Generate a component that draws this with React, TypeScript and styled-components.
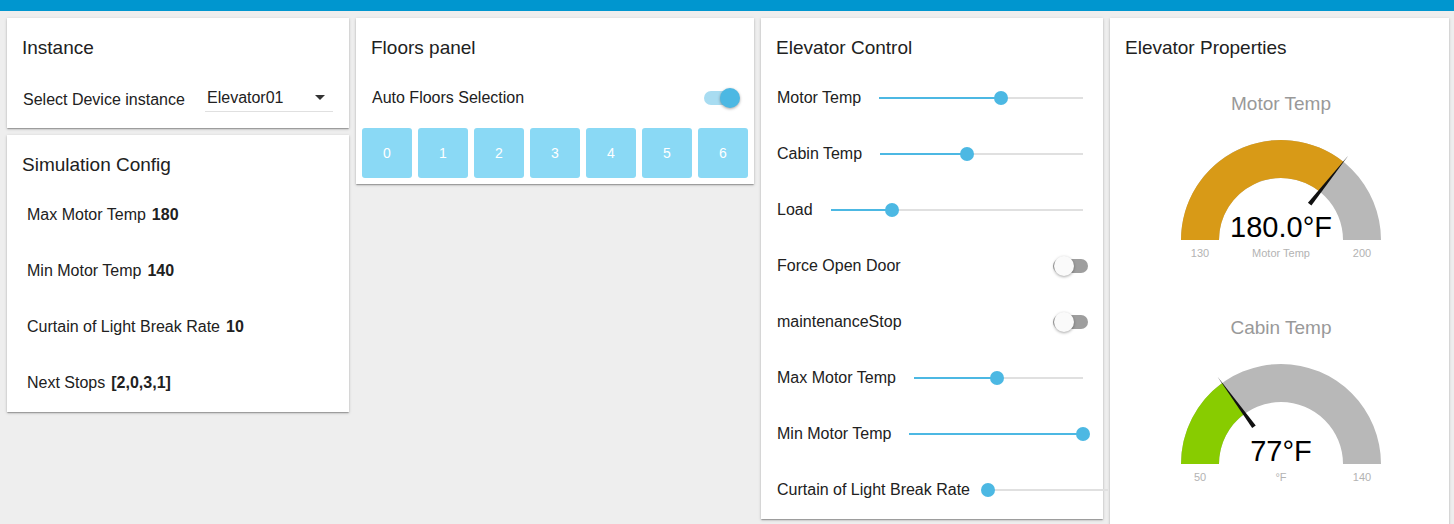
import { createGlobalStyle, styled } from 'styled-components'

const GlobalStyle = createGlobalStyle`
	html, body {
		margin: 0;
		padding: 0;
		overflow: hidden;
		background: #eeeeee;
		font-family: 'Liberation Sans', Arial, sans-serif;
		color: #212121;
	}
`

const config = [
	{ label: 'Max Motor Temp', value: '180' },
	{ label: 'Min Motor Temp', value: '140' },
	{ label: 'Curtain of Light Break Rate', value: '10' },
	{ label: 'Next Stops', value: '[2,0,3,1]' },
]

const controls = [
	{ kind: 'slider', label: 'Motor Temp', value: 0.6 },
	{ kind: 'slider', label: 'Cabin Temp', value: 0.426 },
	{ kind: 'slider', label: 'Load', value: 0.243 },
	{ kind: 'toggle', label: 'Force Open Door', on: false },
	{ kind: 'toggle', label: 'maintenanceStop', on: false },
	{ kind: 'slider', label: 'Max Motor Temp', value: 0.49 },
	{ kind: 'slider', label: 'Min Motor Temp', value: 1 },
	{ kind: 'slider', label: 'Curtain of Light Break Rate', value: 0 },
]

function Toggle({ on }: { on: boolean }) {
	return (
		<Switch>
			<Track $on={on} />
			<Knob $on={on} />
		</Switch>
	)
}

function Slider({ value }: { value: number }) {
	const pct = `${value * 100}%`
	return (
		<SliderBox>
			<Rail />
			<Fill style={{ width: pct }} />
			<Thumb style={{ left: `calc(${pct} - 7px)` }} />
		</SliderBox>
	)
}

function Gauge({
	title,
	value,
	min,
	max,
	unit,
	label,
	color,
}: {
	title: string
	value: string
	min: number
	max: number
	unit: string
	label: string
	color: string
}) {
	const cx = 120
	const cy = 170
	const R = 100
	const r = 62
	const frac = (parseFloat(value) - min) / (max - min)
	const a = Math.PI * (1 - frac)
	const ox = cx + R * Math.cos(a)
	const oy = cy - R * Math.sin(a)
	const ix = cx + r * Math.cos(a)
	const iy = cy - r * Math.sin(a)
	const bg = `M ${cx - R} ${cy} A ${R} ${R} 0 0 1 ${cx + R} ${cy} L ${cx + r} ${cy} A ${r} ${r} 0 0 0 ${cx - r} ${cy} Z`
	const fg = `M ${cx - R} ${cy} A ${R} ${R} 0 0 1 ${ox} ${oy} L ${ix} ${iy} A ${r} ${r} 0 0 0 ${cx - r} ${cy} Z`
	const dx = Math.cos(a)
	const dy = -Math.sin(a)
	const px = -dy
	const py = dx
	const n0 = 46
	const n1 = 108
	const needle = [
		`${cx + dx * n0 + px * 2.2},${cy + dy * n0 + py * 2.2}`,
		`${cx + dx * n1},${cy + dy * n1}`,
		`${cx + dx * n0 - px * 2.2},${cy + dy * n0 - py * 2.2}`,
	].join(' ')
	return (
		<GaugeBox>
			<svg width="240" height="224" viewBox="0 0 240 224">
				<text x={cx} y="40" textAnchor="middle" fontSize="19" fill="#999999" fontFamily="Liberation Sans, Arial, sans-serif">
					{title}
				</text>
				<path d={bg} fill="#b8b8b8" />
				<path d={fg} fill={color} />
				<polygon points={needle} fill="#111" />
				<text x={cx} y="167" textAnchor="middle" fontSize="29" fill="#000" fontFamily="Liberation Sans, Arial, sans-serif">
					{value}
					{unit}
				</text>
				<g fontSize="11" fill="#b3b3b3" fontFamily="Liberation Sans, Arial, sans-serif" textAnchor="middle">
					<text x={cx - 81} y="187">{min}</text>
					<text x={cx} y="187">{label}</text>
					<text x={cx + 81} y="187">{max}</text>
				</g>
			</svg>
		</GaugeBox>
	)
}

function App() {
	return (
		<>
			<GlobalStyle />
			<TopBar />
			<Grid>
				<Column>
					<Card>
						<Title>Instance</Title>
						<SelectRow>
							<SelectLabel>Select Device instance</SelectLabel>
							<SelectBox>
								<span>Elevator01</span>
								<svg width="10" height="5" viewBox="0 0 10 5">
									<polygon points="0,0 10,0 5,5" fill="#333" />
								</svg>
							</SelectBox>
						</SelectRow>
					</Card>
					<Card>
						<Title>Simulation Config</Title>
						<List>
							{config.map((c) => (
								<ConfigRow key={c.label}>
									<span>{c.label}</span>
									<b>{c.value}</b>
								</ConfigRow>
							))}
						</List>
					</Card>
				</Column>
				<Column>
					<Card>
						<Title>Floors panel</Title>
						<ControlRow>
							<span>Auto Floors Selection</span>
							<Toggle on />
						</ControlRow>
						<Floors>
							{[0, 1, 2, 3, 4, 5, 6].map((f) => (
								<FloorButton key={f}>{f}</FloorButton>
							))}
						</Floors>
					</Card>
				</Column>
				<Column>
					<Card>
						<Title>Elevator Control</Title>
						<List>
							{controls.map((c) => (
								<ControlRow key={c.label}>
									<RowLabel>{c.label}</RowLabel>
									{c.kind === 'slider' ? (
										<Slider value={c.value ?? 0} />
									) : (
										<Toggle on={!!c.on} />
									)}
								</ControlRow>
							))}
						</List>
					</Card>
				</Column>
				<Column>
					<PropsCard>
						<Title>Elevator Properties</Title>
						<Gauge
							title="Motor Temp"
							value="180.0"
							unit="°F"
							min={130}
							max={200}
							label="Motor Temp"
							color="#d89a17"
						/>
						<Gauge
							title="Cabin Temp"
							value="77"
							unit="°F"
							min={50}
							max={140}
							label="°F"
							color="#88cc00"
						/>
					</PropsCard>
				</Column>
			</Grid>
		</>
	)
}

export default App

const TopBar = styled.div`
	height: 11px;
	background: #0096cf;
`
const Grid = styled.div`
	display: grid;
	grid-template-columns: 342px 398px 342px 339px;
	column-gap: 7px;
	align-items: start;
	padding: 7px 7px 0;
`
const Column = styled.div`
	display: flex;
	flex-direction: column;
	gap: 7px;
`
const Card = styled.div`
	background: #fff;
	box-shadow:
		0 1px 3px rgba(0, 0, 0, 0.2),
		0 1px 1px rgba(0, 0, 0, 0.14),
		0 2px 1px -1px rgba(0, 0, 0, 0.12);
`
const PropsCard = styled(Card)`
	padding-bottom: 12px;
`
const Title = styled.div`
	font-size: 19px;
	line-height: 24px;
	padding: 18px 15px 10px;
`
const SelectRow = styled.div`
	display: flex;
	align-items: flex-end;
	justify-content: space-between;
	padding: 14px 16px 16px;
	font-size: 16px;
`
const SelectLabel = styled.div`
	line-height: 20px;
	padding-bottom: 2px;
`
const SelectBox = styled.div`
	width: 128px;
	height: 28px;
	box-sizing: border-box;
	border-bottom: 1px solid #e0e0e0;
	display: flex;
	align-items: center;
	justify-content: space-between;
	padding: 0 8px 0 2px;
	span {
		padding-top: 1px;
	}
	svg {
		margin-top: -1px;
	}
`
const List = styled.div`
	padding-bottom: 1px;
`
const ConfigRow = styled.div`
	height: 56px;
	display: flex;
	align-items: center;
	gap: 6px;
	padding: 0 20px;
	font-size: 16px;
	b {
		font-weight: bold;
	}
`
const ControlRow = styled.div`
	height: 56px;
	display: flex;
	align-items: center;
	justify-content: space-between;
	padding: 0 14px 0 16px;
	font-size: 16px;
`
const RowLabel = styled.span`
	white-space: nowrap;
	margin-right: 18px;
`
const SliderBox = styled.div`
	position: relative;
	flex: 1;
	min-width: 120px;
	height: 14px;
	margin-right: 6px;
`
const Rail = styled.div`
	position: absolute;
	left: 0;
	right: 0;
	top: 6px;
	height: 2px;
	background: #e0e0e0;
`
const Fill = styled.div`
	position: absolute;
	left: 0;
	top: 6px;
	height: 2px;
	background: #4cb8e3;
`
const Thumb = styled.div`
	position: absolute;
	top: 0;
	width: 14px;
	height: 14px;
	border-radius: 50%;
	background: #4cb8e3;
`
const Switch = styled.div`
	position: relative;
	width: 36px;
	height: 20px;
	flex: none;
`
const Track = styled.div<{ $on: boolean }>`
	position: absolute;
	left: 0;
	top: 3px;
	width: 35px;
	height: 14px;
	border-radius: 7px;
	background: ${(p) => (p.$on ? '#a8dcf1' : '#9e9e9e')};
`
const Knob = styled.div<{ $on: boolean }>`
	position: absolute;
	top: 0;
	left: ${(p) => (p.$on ? '16px' : '1px')};
	width: 20px;
	height: 20px;
	border-radius: 50%;
	background: ${(p) => (p.$on ? '#4cb8e3' : '#fafafa')};
	box-shadow: 0 1px 3px rgba(0, 0, 0, 0.35);
`
const Floors = styled.div`
	display: grid;
	grid-template-columns: repeat(7, 50px);
	gap: 6px;
	padding: 2px 6px 6px;
`
const FloorButton = styled.div`
	height: 50px;
	border-radius: 3px;
	background: #8ad9f5;
	color: #fff;
	font-size: 14px;
	display: flex;
	align-items: center;
	justify-content: center;
`
const GaugeBox = styled.div`
	display: flex;
	justify-content: center;
	padding-left: 3px;
`
